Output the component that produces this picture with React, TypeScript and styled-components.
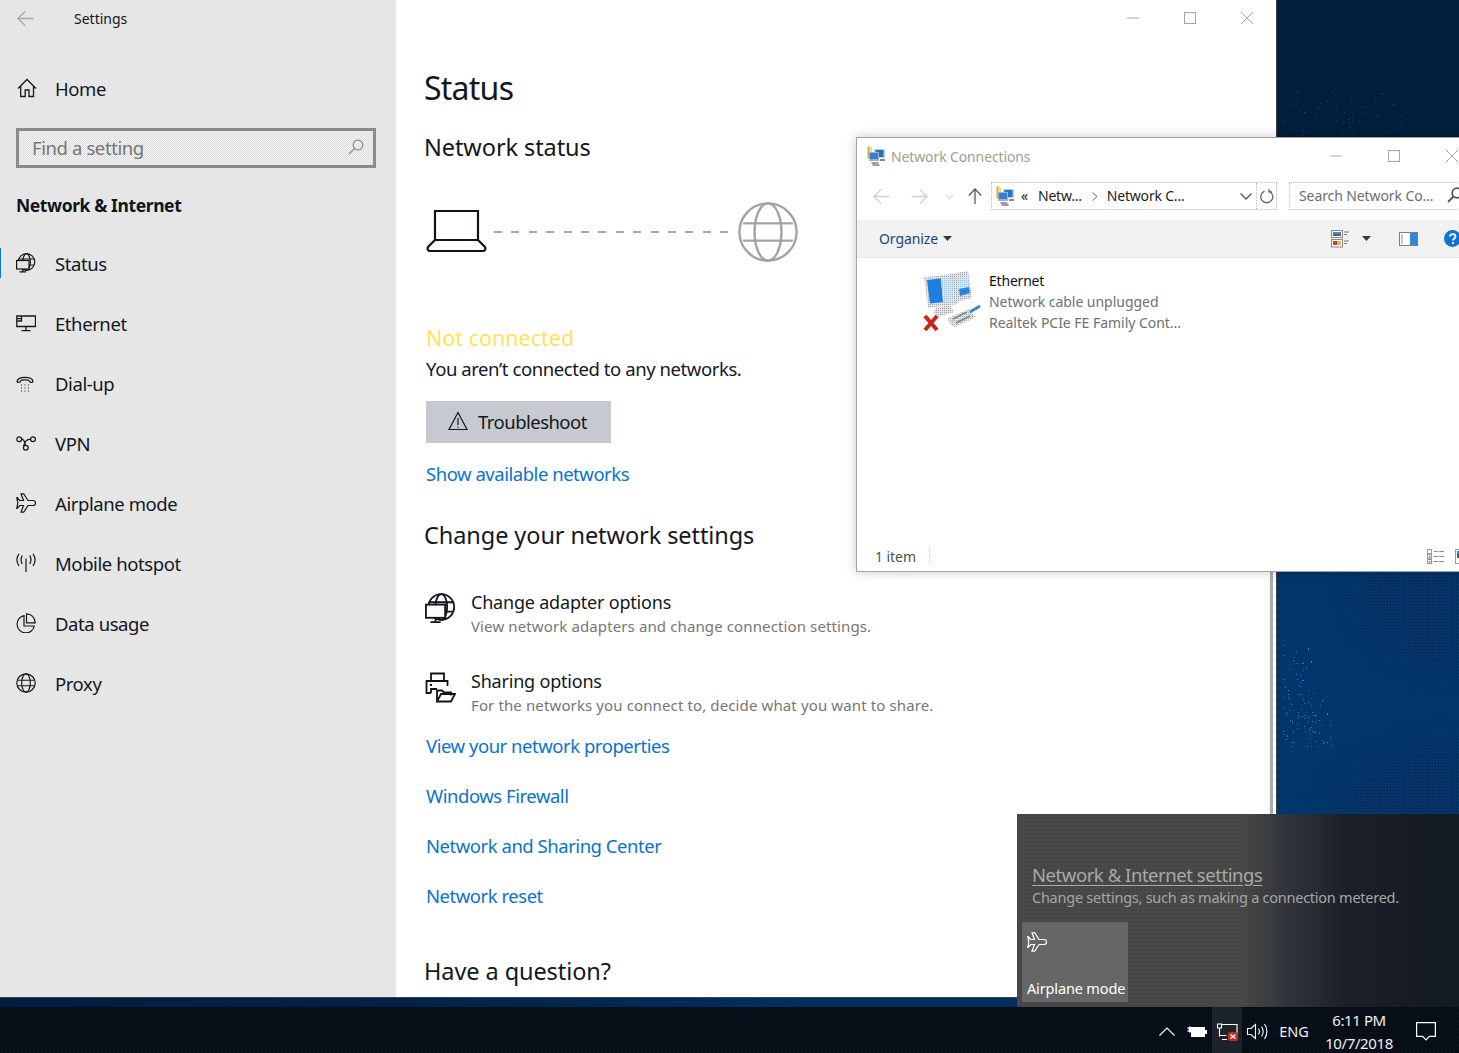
import React from "react";
import styled, { createGlobalStyle, css } from "styled-components";

const UI = `"Noto Sans", "Open Sans", sans-serif`;

const GlobalStyle = createGlobalStyle`
  html, body {
    margin: 0;
    padding: 0;
    background: #00264f;
    font-family: ${UI};
    overflow: hidden;
  }
  * { box-sizing: border-box; }
`;

const checker = (a: string, b: string) => css`
  background: repeating-conic-gradient(${a} 0 25%, ${b} 0 50%) 0 0 / 2px 2px;
`;

const Desktop = styled.div`
  position: relative;
  width: 1459px;
  height: 1053px;
  overflow: hidden;
  display: flex;
  flex-direction: column;
  justify-content: flex-end;
  background: linear-gradient(90deg, rgba(0, 10, 30, 0.45) 0, rgba(0, 10, 30, 0.35) 380px, transparent 800px),
    linear-gradient(180deg, #001e3e 0, #001e3e 140px, #00366b 560px, #00366b 820px, #002c5a 1053px);
  &::before {
    content: "";
    position: absolute;
    inset: 0;
    background: radial-gradient(circle, #00172f 0.7px, transparent 0.9px) 0 0 / 3px 3px;
    -webkit-mask-image: radial-gradient(ellipse 140px 130px at 100% 575px, #000 55%, transparent 100%),
      radial-gradient(ellipse 170px 110px at 100% 820px, #000 50%, transparent 100%);
    mask-image: radial-gradient(ellipse 140px 130px at 100% 575px, #000 55%, transparent 100%),
      radial-gradient(ellipse 170px 110px at 100% 820px, #000 50%, transparent 100%);
  }
`;

const Speckle = styled.svg`
  position: absolute;
  inset: 0;
  width: 1459px;
  height: 1053px;
`;

/* ---------- settings window ---------- */

const SettingsWindow = styled.div`
  position: absolute;
  left: 0;
  top: 0;
  width: 1277px;
  height: 998px;
  display: flex;
  background: #fff;
  border-right: 1px solid #3c4248;
  border-bottom: 1px solid #3c4248;
  overflow: hidden;
`;

const Sidebar = styled.aside`
  width: 396px;
  flex: none;
  background: #e6e6e6;
  color: #14181c;
  display: flex;
  flex-direction: column;
`;

const SideTitle = styled.div`
  height: 36px;
  display: flex;
  align-items: center;
  padding-left: 17px;
  font-size: 14px;
  svg { color: #a8a8a8; }
  span { margin-left: 40px; }
`;

const HomeRow = styled.div`
  height: 60px;
  margin-top: 22px;
  display: flex;
  align-items: center;
  padding-left: 17px;
  font-size: 18.5px;
  letter-spacing: -0.4px;
  span { margin-left: 18px; }
`;

const SearchBox = styled.div`
  margin: 10px 20px 0 16px;
  height: 40px;
  border: 3px solid #8a8a8a;
  display: flex;
  align-items: center;
  justify-content: space-between;
  padding: 0 9px 2px 13px;
  color: #767676;
  font-size: 18.5px;
  letter-spacing: -0.4px;
  ${checker("#f2f2f2", "#dedede")}
`;

const SectionLabel = styled.div`
  margin-top: 23px;
  padding-left: 16px;
  height: 28px;
  line-height: 28px;
  font-size: 17.5px;
  font-weight: 700;
  letter-spacing: -0.4px;
  color: #10141a;
`;

const NavList = styled.nav`
  margin-top: 14px;
  display: flex;
  flex-direction: column;
`;

const NavRow = styled.div<{ $active?: boolean }>`
  position: relative;
  height: 60px;
  display: flex;
  align-items: center;
  padding-left: 16px;
  font-size: 18.5px;
  letter-spacing: -0.42px;
  &::before {
    content: "";
    display: ${(p) => (p.$active ? "block" : "none")};
    position: absolute;
    left: 0;
    top: 15px;
    width: 1px;
    height: 30px;
    background: #0078d7;
  }
`;

const NavIcon = styled.span`
  width: 39px;
  flex: none;
  display: flex;
  align-items: center;
`;

const Main = styled.main`
  position: relative;
  flex: 1;
  padding: 68px 0 0 30px;
  color: #14181c;
  display: flex;
  flex-direction: column;
  align-items: flex-start;
`;

const Scrollbar = styled.div`
  position: absolute;
  top: 137px;
  right: 3px;
  width: 3px;
  height: 690px;
  ${checker("#8d8d8d", "#c9c9c9")}
`;

const WindowButtons = styled.div`
  position: absolute;
  top: 12px;
  right: 23px;
  display: flex;
  gap: 45px;
  color: #a6a6a6;
`;

const PageTitle = styled.h1`
  margin: 0 0 0 -2px;
  font-weight: 400;
  font-size: 32px;
  line-height: 40px;
  letter-spacing: -0.75px;
`;

const Heading = styled.h2<{ $top: number }>`
  margin: ${(p) => p.$top}px 0 0 -2px;
  font-weight: 400;
  font-size: 23.5px;
  line-height: 32px;
  letter-spacing: -0.08px;
`;

const Illustration = styled.div`
  margin-top: 39px;
  width: 372px;
  height: 60px;
  display: flex;
  align-items: center;
  justify-content: space-between;
  color: #a3a3a3;
`;

const NotConnected = styled.div`
  margin-top: 61px;
  font-size: 21.5px;
  line-height: 30px;
  letter-spacing: 0;
  color: #ffe15e;
`;

const Body = styled.div`
  margin-top: 2px;
  font-size: 18.5px;
  line-height: 28px;
  letter-spacing: -0.42px;
`;

const TroubleButton = styled.div`
  margin-top: 18px;
  width: 185px;
  height: 42px;
  background: #c6c9cf;
  display: flex;
  align-items: center;
  padding: 0 0 2px 22px;
  gap: 10px;
  font-size: 18.5px;
  letter-spacing: -0.53px;
`;

const LinkText = styled.a<{ $top: number }>`
  display: block;
  margin-top: ${(p) => p.$top}px;
  font-size: 18.5px;
  line-height: 28px;
  letter-spacing: -0.47px;
  color: #0a72cf;
`;

const OptionRow = styled.div<{ $top: number }>`
  margin-top: ${(p) => p.$top}px;
  display: flex;
  align-items: flex-start;
  margin-left: -1px;
`;

const OptionIcon = styled.span`
  width: 46px;
  flex: none;
  padding-top: 3px;
`;

const OptionTitle = styled.div`
  font-size: 18px;
  line-height: 24px;
  letter-spacing: -0.2px;
`;

const OptionSub = styled.div`
  font-size: 15px;
  line-height: 24px;
  color: #767676;
  letter-spacing: 0.12px;
`;

/* ---------- explorer ---------- */

const ExplorerWindow = styled.div`
  position: absolute;
  left: 856px;
  top: 137px;
  width: 620px;
  height: 435px;
  background: #fff;
  border: 1px solid #a4a4a4;
  box-shadow: 0 0 10px rgba(0, 0, 0, 0.22);
  display: flex;
  flex-direction: column;
`;

const ExTitleBar = styled.div`
  height: 38px;
  flex: none;
  position: relative;
  display: flex;
  align-items: center;
  padding: 0 0 2px 9px;
  gap: 5px;
  font-size: 14px;
  letter-spacing: -0.12px;
  color: #a3a08c;
`;

const ExControls = styled.div`
  position: absolute;
  left: 473px;
  top: 12px;
  display: flex;
  gap: 46px;
  color: #a8a8a8;
`;

const ExNav = styled.div`
  height: 44px;
  flex: none;
  display: flex;
  align-items: flex-start;
  padding: 6px 0 0 15px;
`;

const ArrowSlot = styled.span<{ $left: number; $dark?: boolean }>`
  width: 18px;
  height: 28px;
  margin-left: ${(p) => p.$left}px;
  flex: none;
  display: flex;
  align-items: center;
  justify-content: center;
  color: ${(p) => (p.$dark ? "#5a5a5a" : "#d0d0d0")};
`;

const Flipped = styled.span`
  transform: scaleX(-1);
`;

const AddressBox = styled.div`
  margin-left: 7px;
  width: 286px;
  height: 28px;
  flex: none;
  border: 1px dotted #bdbdbd;
  display: flex;
  align-items: center;
  padding: 0 0 0 3px;
  font-size: 14px;
  letter-spacing: -0.2px;
  color: #1c1c1c;
`;

const Crumb = styled.span<{ $left: number }>`
  margin-left: ${(p) => p.$left}px;
  margin-top: -2px;
  white-space: nowrap;
`;

const CrumbArrow = styled.span`
  margin: 0 9px 0 10px;
`;

const AddressEnd = styled.span`
  margin-left: auto;
  height: 100%;
  display: flex;
  align-items: center;
  color: #666;
`;

const RefreshSlot = styled.span`
  width: 20px;
  height: 100%;
  margin-left: 4px;
  border-left: 1px dotted #bdbdbd;
  display: flex;
  align-items: center;
  justify-content: center;
`;

const SearchField = styled.div`
  margin-left: 12px;
  width: 175px;
  height: 28px;
  flex: none;
  border: 1px dotted #bdbdbd;
  display: flex;
  align-items: center;
  justify-content: space-between;
  padding: 0 0 2px 9px;
  font-size: 14px;
  letter-spacing: -0.1px;
  color: #6d6d6d;
  white-space: nowrap;
`;

const Toolbar = styled.div`
  height: 38px;
  flex: none;
  display: flex;
  align-items: center;
  padding: 0 14px 0 22px;
  border-bottom: 1px solid #e6e6e6;
  ${checker("#f7f7f7", "#ececec")}
`;

const Organize = styled.span`
  font-size: 14px;
  letter-spacing: -0.1px;
  color: #1b4478;
  display: flex;
  align-items: center;
  gap: 5px;
`;

const ToolIcons = styled.div`
  margin-left: auto;
  display: flex;
  align-items: center;
`;

const ToolSlot = styled.span<{ $left: number }>`
  margin-left: ${(p) => p.$left}px;
`;

const ExContent = styled.div`
  flex: 1;
  display: flex;
  align-items: flex-start;
  padding: 12px 0 0 65px;
`;

const ItemText = styled.div`
  margin: 0 0 0 7px;
  font-size: 14px;
  line-height: 21px;
  letter-spacing: -0.03px;
  color: #6f6f6f;
  div:first-child { color: #111; letter-spacing: -0.2px; }
`;

const StatusBar = styled.div`
  height: 26px;
  flex: none;
  margin-bottom: 2px;
  display: flex;
  align-items: center;
  padding-left: 18px;
  font-size: 14px;
  letter-spacing: -0.05px;
  color: #4f4f4f;
`;

const StatusSep = styled.span`
  width: 1px;
  height: 16px;
  margin-left: 13px;
  border-left: 1px dotted #cfcfcf;
`;

const StatusIcons = styled.span`
  position: absolute;
  left: 570px;
  display: flex;
  gap: 10px;
`;

/* ---------- flyout + taskbar ---------- */

const Flyout = styled.div`
  position: absolute;
  left: 1017px;
  top: 814px;
  width: 442px;
  height: 193px;
  padding: 48px 0 0 15px;
  background: linear-gradient(90deg, #464646 0, #464646 225px, #30343a 270px, #1b1f27 330px, #141a22 442px);
  &::before {
    content: "";
    position: absolute;
    inset: 0;
    background: radial-gradient(circle, rgba(255, 255, 255, 0.09) 0.5px, transparent 0.8px) 0 0 / 4px 4px;
    -webkit-mask-image: linear-gradient(90deg, #000 0, #000 220px, transparent 300px);
    mask-image: linear-gradient(90deg, #000 0, #000 220px, transparent 300px);
    pointer-events: none;
  }
`;

const FlyoutLink = styled.div`
  position: relative;
  font-size: 18.5px;
  line-height: 26px;
  letter-spacing: -0.45px;
  color: #a9a9a9;
  text-decoration: underline;
  text-underline-offset: 3px;
`;

const FlyoutSub = styled.div`
  position: relative;
  margin-top: -1px;
  font-size: 14.5px;
  line-height: 20px;
  letter-spacing: -0.25px;
  color: #a6a6a6;
  white-space: nowrap;
`;

const Tile = styled.div`
  position: relative;
  margin: 15px 0 0 -10px;
  width: 106px;
  height: 80px;
  background: #666;
  color: #fff;
  font-size: 14.5px;
  letter-spacing: -0.15px;
  display: flex;
  flex-direction: column;
  justify-content: space-between;
  padding: 10px 0 4px 5px;
  white-space: nowrap;
`;

const Taskbar = styled.footer`
  position: relative;
  height: 46px;
  flex: none;
  background: #060d17;
  color: #eef0f2;
  display: flex;
  justify-content: flex-end;
  align-items: stretch;
  padding-right: 9px;
  &::before {
    content: "";
    position: absolute;
    inset: 0;
    background: radial-gradient(circle, rgba(120, 140, 170, 0.1) 0.5px, transparent 0.8px) 0 0 / 4px 4px;
  }
`;

const TrayItem = styled.div<{ $w: number; $active?: boolean }>`
  position: relative;
  width: ${(p) => p.$w}px;
  padding-top: 2px;
  display: flex;
  align-items: center;
  justify-content: center;
  font-size: 14.5px;
  background: ${(p) => (p.$active ? "#1d232b" : "transparent")};
`;

const Clock = styled.div`
  position: relative;
  width: 86px;
  text-align: center;
  font-size: 15px;
  line-height: 22.5px;
  letter-spacing: -0.4px;
  padding-top: 2px;
`;

/* ---------- drawings ---------- */

const Svg = ({ s, h, children, w = 1.3 }: { s: number; h?: number; children: React.ReactNode; w?: number }) => (
  <svg
    width={s}
    height={h ?? s}
    viewBox={`0 0 ${s} ${h ?? s}`}
    fill="none"
    stroke="currentColor"
    strokeWidth={w}
    style={{ display: "block", flex: "none" }}
  >
    {children}
  </svg>
);

const BackArrow = () => (
  <Svg s={17}>
    <path d="M16.5 8.5H1M8 1.5 1 8.5l7 7" />
  </Svg>
);

const HomeIcon = () => (
  <Svg s={20}>
    <path d="M1 10.5 10 1.5l9 9M3.7 8v10.5h4.5v-6.5h3.8v6.5h4.5V8" />
  </Svg>
);

const Globe = ({ s, w = 1.3 }: { s: number; w?: number }) => {
  const c = s / 2;
  const r = c - w / 2 - 0.2;
  return (
    <Svg s={s} w={w}>
      <circle cx={c} cy={c} r={r} />
      <ellipse cx={c} cy={c} rx={r * 0.47} ry={r} />
      <path d={`M${c - r * 0.87} ${c - r * 0.3}H${c + r * 0.87}M${c - r * 0.87} ${c + r * 0.3}H${c + r * 0.87}`} />
    </Svg>
  );
};

const StatusIcon = ({ s = 20, bg = "#e6e6e6" }: { s?: number; bg?: string }) => (
  <svg width={s} height={s} viewBox="0 0 20 20" fill="none" stroke="currentColor" strokeWidth="1.2" style={{ display: "block" }}>
    <circle cx="10.5" cy="9" r="8.3" />
    <ellipse cx="10.5" cy="9" rx="3.8" ry="8.3" />
    <path d="M3 6h15M4 12h14" />
    <rect x="0.6" y="7.5" width="12.4" height="8.5" fill={bg} />
    <path d="M6.8 16v2.4M3.5 18.8h6.6" />
  </svg>
);

const EthernetIcon = () => (
  <Svg s={20} h={17}>
    <path d="M5.5 1h14v10.5H0.8V1h4.7v5H0.8M10 11.5V15M5.5 15.6h9M0.8 3.6h4.7" />
  </Svg>
);

const DialIcon = () => (
  <svg width="18" height="17" viewBox="0 0 18 17" fill="none" stroke="currentColor" strokeWidth="1.2" style={{ display: "block" }}>
    <path d="M1 6.5C1 1 17 1 17 6.5c0 1.2-3.5 1.2-3.5-.2 0-2-9-2-9 0 0 1.4-3.5 1.4-3.5.2Z" />
    <path d="M5 10h1M8.5 10h1M12 10h1M5 13h1M8.5 13h1M12 13h1M5 16h1M8.5 16h1M12 16h1" strokeWidth="1" />
  </svg>
);

const VpnIcon = () => (
  <Svg s={20} h={16} w={1.2}>
    <circle cx="3.2" cy="4.2" r="2.4" />
    <circle cx="17" cy="4.2" r="2.4" />
    <circle cx="9.8" cy="12.8" r="2.4" />
    <path d="M5.6 4.2c3.5 0 3.2 6 4.2 6.2M14.6 4.2C10 4.2 9 7 7.5 11" />
  </Svg>
);

const Plane = () => (
  <Svg s={20} w={1.2}>
    <path d="M5 .8h2.7L12 7.5h5c3.4 0 3.4 5 0 5h-5l-4.3 6.7H5l2.5-6.7H3.7L1.2 15.4H.8L1.8 10 .8 4.6h.4l2.5 2.9h3.8Z" />
  </Svg>
);

const HotspotIcon = () => (
  <Svg s={20} w={1.2}>
    <path d="M10 5.5v13.5M6.3 2.5c-1.5 2.5-1.5 6 0 8.5M13.7 2.5c1.5 2.5 1.5 6 0 8.5M3 .8c-2.8 4-2.8 8 0 12M17 .8c2.8 4 2.8 8 0 12" />
  </Svg>
);

const DataIcon = () => (
  <Svg s={20} w={1.2}>
    <path d="M8 2.7a8.7 8.7 0 1 0 10.3 10.3H8V2.7Z" />
    <path d="M10.5 .8c4.7 0 8.7 3.8 8.7 9h-8.7V.8Z" />
  </Svg>
);

const SearchGlyph = ({ color = "#8a8a8a", w = 1.2 }: { color?: string; w?: number }) => (
  <svg width="16" height="16" viewBox="0 0 16 16" fill="none" stroke={color} strokeWidth={w} style={{ display: "block" }}>
    <circle cx="10" cy="6" r="4.8" />
    <path d="M6.5 9.5 1 15" />
  </svg>
);

const Laptop = () => (
  <svg width="62" height="44" viewBox="0 0 62 44" fill="none" stroke="#10141a" strokeWidth="2.2" style={{ display: "block" }}>
    <path d="M9 30V1h43v29M9 30 2 37c-1 2 0 4 2 4h53c2 0 3-2 2-4l-7-7Z" />
  </svg>
);

const DashedLine = styled.div`
  flex: 1;
  height: 2px;
  margin: 0 10px 0 6px;
  background: repeating-linear-gradient(90deg, #a8a8a8 0 8px, transparent 8px 17.4px);
`;

const WarnIcon = () => (
  <Svg s={20} w={1.2}>
    <path d="M10 1.5 19 18.5H1Z" />
    <path d="M10 7v7M10 15.5v1.3" />
  </Svg>
);

const SharingIcon = () => (
  <svg width="31" height="31" viewBox="0 0 31 31" fill="none" stroke="#10141a" strokeWidth="1.8" style={{ display: "block" }}>
    <path d="M6 9V1.5h13V9M6 21H1.5V9h21v5M5 13h2" />
    <path d="M6 21v-4h6M12 29.5v-11h5l2 2h7v3M12 29.5h14l4-7.5H16l-4 7.5Z" />
  </svg>
);

const MinBar = ({ w = 12 }: { w?: number }) => (
  <Svg s={w} w={1}>
    <path d={`M0 ${w / 2}H${w}`} />
  </Svg>
);

const MaxBox = ({ w = 12 }: { w?: number }) => (
  <Svg s={w} w={1.1}>
    <rect x=".5" y=".5" width={w - 1} height={w - 1} />
  </Svg>
);

const CloseX = ({ w = 12 }: { w?: number }) => (
  <Svg s={w} w={1}>
    <path d={`M0 0L${w} ${w}M${w} 0L0 ${w}`} />
  </Svg>
);

const FolderNet = () => (
  <svg width="20" height="21" viewBox="0 0 20 21" style={{ display: "block", flex: "none" }}>
    <path d="M1 0h3l2 2v11H1Z" fill="#efd98a" />
    <path d="M2 1h1v11H2Z" fill="#c9a94c" />
    <rect x="8" y="3" width="11" height="9" fill="#c8ccd2" />
    <rect x="9.5" y="4" width="8" height="7" fill="#1f74d2" />
    <rect x="3" y="6" width="10" height="9" fill="#aab0b8" />
    <rect x="4" y="7" width="8" height="6" fill="#2a7fd9" />
    <path d="M5 16h7l2 4H7Z" fill="#9aa0a8" />
    <rect x="14" y="13" width="5" height="2" fill="#7d8790" />
  </svg>
);

const NetworkAdapterIcon = () => (
  <svg width="60" height="62" viewBox="0 0 60 62" style={{ display: "block", flex: "none" }}>
    <defs>
      <pattern id="ditherBlue" width="2" height="2" patternUnits="userSpaceOnUse">
        <rect width="2" height="2" fill="#dfe6ee" />
        <rect width="1" height="1" fill="#8fbce8" />
      </pattern>
      <pattern id="ditherGrey" width="2" height="2" patternUnits="userSpaceOnUse">
        <rect width="2" height="2" fill="#e4e4e4" />
        <rect width="1" height="1" fill="#9ea3a8" />
      </pattern>
    </defs>
    <path d="M27 4 46 1l4 27-17 4Z" fill="url(#ditherGrey)" />
    <path d="M35 8 46 6l2 17-11 3Z" fill="url(#ditherBlue)" />
    <path d="M37 19l10-2 1 6-10 3Z" fill="#2a84de" />
    <path d="M2 7 32 4l4 30-30 4Z" fill="url(#ditherGrey)" />
    <path d="M5 10 19 8.5 21 32 8 33.5Z" fill="#1f7fe0" />
    <path d="M19 8.5 30 7.5l2.5 23L21 32Z" fill="url(#ditherBlue)" />
    <path d="M14 38l14-3 4 7-16 5c-4-1-5-6-2-9Z" fill="url(#ditherGrey)" />
    <path d="M26 48 47 39l7 8-21 10c-4-1-7-5-7-9Z" fill="url(#ditherGrey)" />
    <path d="M31 49l14-7M34 53l14-7" stroke="#7f868d" strokeWidth="1.5" />
    <path d="M48 42 58 36" stroke="#3d86c8" strokeWidth="3" />
    <path d="M3 46 15 60M15 46 3 60" stroke="#c8261c" strokeWidth="4" />
  </svg>
);

const Caret = () => (
  <svg width="9" height="5" viewBox="0 0 9 5" style={{ display: "block", flex: "none" }}>
    <path d="M0 0h9L4.5 5Z" fill="#2a3a4e" />
  </svg>
);

const ViewIcon = () => (
  <svg width="20" height="20" viewBox="0 0 20 20" fill="none" style={{ display: "block" }}>
    <rect x=".5" y="1.5" width="11" height="7" fill="#fff" stroke="#8a8a8a" />
    <rect x="2" y="3" width="8" height="2" fill="#3d8bd9" />
    <rect x="2" y="5" width="8" height="2" fill="#55606b" />
    <rect x=".5" y="10.5" width="11" height="7.5" fill="#fff" stroke="#8a8a8a" />
    <rect x="2" y="12" width="4" height="4" fill="#c8443a" />
    <rect x="6" y="12" width="4" height="4" fill="#e0b94a" />
    <path d="M13 3h5M13 5.5h3M13 12h5M13 14.5h3" stroke="#7b7b7b" />
  </svg>
);

const PaneIcon = () => (
  <svg width="19" height="14" viewBox="0 0 19 14" style={{ display: "block" }}>
    <rect x=".5" y=".5" width="18" height="13" fill="#fff" stroke="#7f7f7f" />
    <rect x="2" y="2" width="2" height="10" fill="#c9c9c9" />
    <rect x="11" y="1" width="7" height="12" fill="#2f86dc" />
  </svg>
);

const HelpIcon = () => (
  <svg width="17" height="17" viewBox="0 0 17 17" style={{ display: "block" }}>
    <circle cx="8.5" cy="8.5" r="8.5" fill="#1272d3" />
    <path d="M6 6.5c0-3.2 5.5-3.2 5.5 0 0 2-2.5 2-2.5 4" fill="none" stroke="#fff" strokeWidth="1.8" />
    <rect x="8" y="12" width="2" height="2" fill="#fff" />
  </svg>
);

const DetailsIcon = () => (
  <svg width="18" height="15" viewBox="0 0 18 15" fill="none" style={{ display: "block" }}>
    <rect x=".5" y=".5" width="4" height="4" stroke="#9a9a9a" />
    <rect x=".5" y="5.5" width="4" height="4" stroke="#9a9a9a" />
    <rect x=".5" y="10.5" width="4" height="4" stroke="#9a9a9a" />
    <rect x="2" y="12" width="1.5" height="1.5" fill="#b5403a" />
    <rect x="2" y="7" width="1.5" height="1.5" fill="#666" />
    <path d="M7 2.5h4M12 2.5h5M7 7.5h4M12 7.5h5M7 12.5h4M12 12.5h5" stroke="#8a8a8a" />
  </svg>
);

const LargeIcon = () => (
  <svg width="8" height="15" viewBox="0 0 8 15" style={{ display: "block" }}>
    <rect x=".5" y=".5" width="12" height="14" fill="#fff" stroke="#9a9a9a" />
    <rect x="2" y="2" width="6" height="3" fill="#2f86dc" />
    <rect x="2" y="5" width="6" height="4" fill="#555" />
  </svg>
);

const TrayChevron = () => (
  <svg width="16" height="9" viewBox="0 0 16 9" fill="none" stroke="#fff" strokeWidth="1.2" style={{ display: "block" }}>
    <path d="M.5 8.5 8 1l7.5 7.5" />
  </svg>
);

const Battery = () => (
  <svg width="20" height="12" viewBox="0 0 20 12" style={{ display: "block" }}>
    <path d="M0 3h2M0 6h2M2 2h2v5H2Z" stroke="#fff" fill="#fff" strokeWidth=".8" />
    <rect x="4.5" y="2.5" width="13" height="9" fill="#fff" stroke="#fff" />
    <rect x="18" y="5" width="2" height="4" fill="#fff" />
  </svg>
);

const TrayNetwork = () => (
  <svg width="21" height="19" viewBox="0 0 21 19" fill="none" stroke="#fff" strokeWidth="1.1" style={{ display: "block" }}>
    <path d="M4.5 2.5H20v11M.5 2h4v4h-4ZM2.5 6v8.5M2.5 13.5h7M5 17.5h5" />
    <rect x="11" y="10" width="10" height="9" rx="2" fill="#c42b1c" stroke="none" />
    <path d="M13.5 12.5l5 4M18.5 12.5l-5 4" stroke="#fff" strokeWidth="1.4" />
  </svg>
);

const Volume = () => (
  <svg width="21" height="17" viewBox="0 0 21 17" fill="none" stroke="#fff" strokeWidth="1.1" style={{ display: "block" }}>
    <path d="M.5 5.5H4l4.5-4v14L4 11.500H.5ZM11.5 5.5c1.2 2 1.2 4 0 6M14.5 3.5c2 3 2 7 0 10M17.5 1c3.2 4.5 3.2 10.5 0 15" />
  </svg>
);

const Notification = () => (
  <svg width="20" height="19" viewBox="0 0 20 19" fill="none" stroke="#fff" strokeWidth="1.2" style={{ display: "block" }}>
    <path d="M.6.6h18.8v13.8h-6L10 17.8l-3.4-3.400H.6Z" />
  </svg>
);

const spots = (count: number, x: number, y: number, w: number, h: number) =>
  Array.from({ length: count }, (_, i) => ({
    cx: Math.round(x + (Math.abs(Math.sin(i * 12.9898) * 43758.5453) % 1) * w),
    cy: Math.round(y + (Math.abs(Math.sin(i * 78.233) * 12543.123) % 1) * h),
  }));

const navItems: { label: string; icon: React.ReactNode; active?: boolean }[] = [
  { label: "Status", icon: <StatusIcon />, active: true },
  { label: "Ethernet", icon: <EthernetIcon /> },
  { label: "Dial-up", icon: <DialIcon /> },
  { label: "VPN", icon: <VpnIcon /> },
  { label: "Airplane mode", icon: <Plane /> },
  { label: "Mobile hotspot", icon: <HotspotIcon /> },
  { label: "Data usage", icon: <DataIcon /> },
  { label: "Proxy", icon: <Globe s={20} w={1.2} /> },
];

const App: React.FC = () => (
  <Desktop>
    <GlobalStyle />
    <Speckle viewBox="0 0 1459 1053">
      {spots(60, 1282, 90, 120, 45).map((p, i) => (
        <rect key={`a${i}`} x={p.cx} y={p.cy} width="1" height="1" fill="#0a4a8a" />
      ))}
      {spots(30, 1283, 645, 30, 50).map((p, i) => (
        <rect key={`b${i}`} x={p.cx} y={p.cy} width="1" height="1" fill="#2b80d2" />
      ))}
      {spots(70, 1283, 697, 48, 50).map((p, i) => (
        <rect key={`c${i}`} x={p.cx} y={p.cy} width="1" height="1" fill="#2b80d2" />
      ))}
    </Speckle>

    <SettingsWindow>
      <Sidebar>
        <SideTitle>
          <BackArrow />
          <span>Settings</span>
        </SideTitle>
        <HomeRow>
          <HomeIcon />
          <span>Home</span>
        </HomeRow>
        <SearchBox>
          Find a setting
          <SearchGlyph />
        </SearchBox>
        <SectionLabel>Network &amp; Internet</SectionLabel>
        <NavList>
          {navItems.map((item) => (
            <NavRow key={item.label} $active={item.active}>
              <NavIcon>{item.icon}</NavIcon>
              {item.label}
            </NavRow>
          ))}
        </NavList>
      </Sidebar>

      <Main>
        <WindowButtons>
          <MinBar />
          <MaxBox />
          <CloseX />
        </WindowButtons>
        <Scrollbar />
        <PageTitle>Status</PageTitle>
        <Heading $top={23}>Network status</Heading>
        <Illustration>
          <Laptop />
          <DashedLine />
          <Globe s={60} w={2.4} />
        </Illustration>
        <NotConnected>Not connected</NotConnected>
        <Body>You aren’t connected to any networks.</Body>
        <TroubleButton>
          <WarnIcon />
          Troubleshoot
        </TroubleButton>
        <LinkText $top={17}>Show available networks</LinkText>
        <Heading $top={31}>Change your network settings</Heading>
        <OptionRow $top={39}>
          <OptionIcon>
            <StatusIcon s={31} bg="#fff" />
          </OptionIcon>
          <div>
            <OptionTitle>Change adapter options</OptionTitle>
            <OptionSub>View network adapters and change connection settings.</OptionSub>
          </div>
        </OptionRow>
        <OptionRow $top={31}>
          <OptionIcon>
            <SharingIcon />
          </OptionIcon>
          <div>
            <OptionTitle>Sharing options</OptionTitle>
            <OptionSub>For the networks you connect to, decide what you want to share.</OptionSub>
          </div>
        </OptionRow>
        <LinkText $top={15}>View your network properties</LinkText>
        <LinkText $top={22}>Windows Firewall</LinkText>
        <LinkText $top={22}>Network and Sharing Center</LinkText>
        <LinkText $top={22}>Network reset</LinkText>
        <Heading $top={45}>Have a question?</Heading>
      </Main>
    </SettingsWindow>

    <ExplorerWindow>
      <ExTitleBar>
        <FolderNet />
        Network Connections
        <ExControls>
          <MinBar />
          <MaxBox />
          <CloseX />
        </ExControls>
      </ExTitleBar>
      <ExNav>
        <ArrowSlot $left={0}>
          <BackArrow />
        </ArrowSlot>
        <ArrowSlot $left={20}>
          <Flipped>
            <BackArrow />
          </Flipped>
        </ArrowSlot>
        <ArrowSlot $left={12}>
          <svg width="9" height="5" viewBox="0 0 9 5" fill="none" stroke="currentColor" style={{ display: "block" }}>
            <path d="M.5 .5 4.5 4.5 8.5 .5" />
          </svg>
        </ArrowSlot>
        <ArrowSlot $left={8} $dark>
          <svg width="14" height="16" viewBox="0 0 14 16" fill="none" stroke="currentColor" strokeWidth="1.3" style={{ display: "block" }}>
            <path d="M7 16V1M.8 7.5 7 1l6.2 6.5" />
          </svg>
        </ArrowSlot>
        <AddressBox>
          <FolderNet />
          <Crumb $left={6}>«</Crumb>
          <Crumb $left={10}>Netw...</Crumb>
          <CrumbArrow>
            <svg width="6" height="9" viewBox="0 0 6 9" fill="none" stroke="#666" style={{ display: "block" }}>
              <path d="M.5 .5 5 4.5.5 8.5" />
            </svg>
          </CrumbArrow>
          <Crumb $left={0}>Network C...</Crumb>
          <AddressEnd>
            <svg width="12" height="7" viewBox="0 0 12 7" fill="none" stroke="#555" strokeWidth="1.3" style={{ display: "block" }}>
              <path d="M.5 .5 6 6l5.5-5.5" />
            </svg>
            <RefreshSlot>
              <svg width="14" height="15" viewBox="0 0 14 15" fill="none" stroke="#666" strokeWidth="1.3" style={{ display: "block" }}>
                <path d="M9 2.2a6 6 0 1 1-4.5 0M9 0v3H12" />
              </svg>
            </RefreshSlot>
          </AddressEnd>
        </AddressBox>
        <SearchField>
          Search Network Co...
          <SearchGlyph color="#555" w={1.8} />
        </SearchField>
      </ExNav>
      <Toolbar>
        <Organize>
          Organize <Caret />
        </Organize>
        <ToolIcons>
          <ViewIcon />
          <ToolSlot $left={11}>
            <Caret />
          </ToolSlot>
          <ToolSlot $left={28}>
            <PaneIcon />
          </ToolSlot>
          <ToolSlot $left={26}>
            <HelpIcon />
          </ToolSlot>
        </ToolIcons>
      </Toolbar>
      <ExContent>
        <NetworkAdapterIcon />
        <ItemText>
          <div>Ethernet</div>
          <div>Network cable unplugged</div>
          <div>Realtek PCIe FE Family Cont...</div>
        </ItemText>
      </ExContent>
      <StatusBar>
        1 item
        <StatusSep />
        <StatusIcons>
          <DetailsIcon />
          <LargeIcon />
        </StatusIcons>
      </StatusBar>
    </ExplorerWindow>

    <Flyout>
      <FlyoutLink>Network &amp; Internet settings</FlyoutLink>
      <FlyoutSub>Change settings, such as making a connection metered.</FlyoutSub>
      <Tile>
        <Plane />
        Airplane mode
      </Tile>
    </Flyout>

    <Taskbar>
      <TrayItem $w={30}>
        <TrayChevron />
      </TrayItem>
      <TrayItem $w={30}>
        <Battery />
      </TrayItem>
      <TrayItem $w={30} $active>
        <TrayNetwork />
      </TrayItem>
      <TrayItem $w={30}>
        <Volume />
      </TrayItem>
      <TrayItem $w={44}>ENG</TrayItem>
      <Clock>
        6:11 PM
        <br />
        10/7/2018
      </Clock>
      <TrayItem $w={48}>
        <Notification />
      </TrayItem>
    </Taskbar>
  </Desktop>
);

export default App;
